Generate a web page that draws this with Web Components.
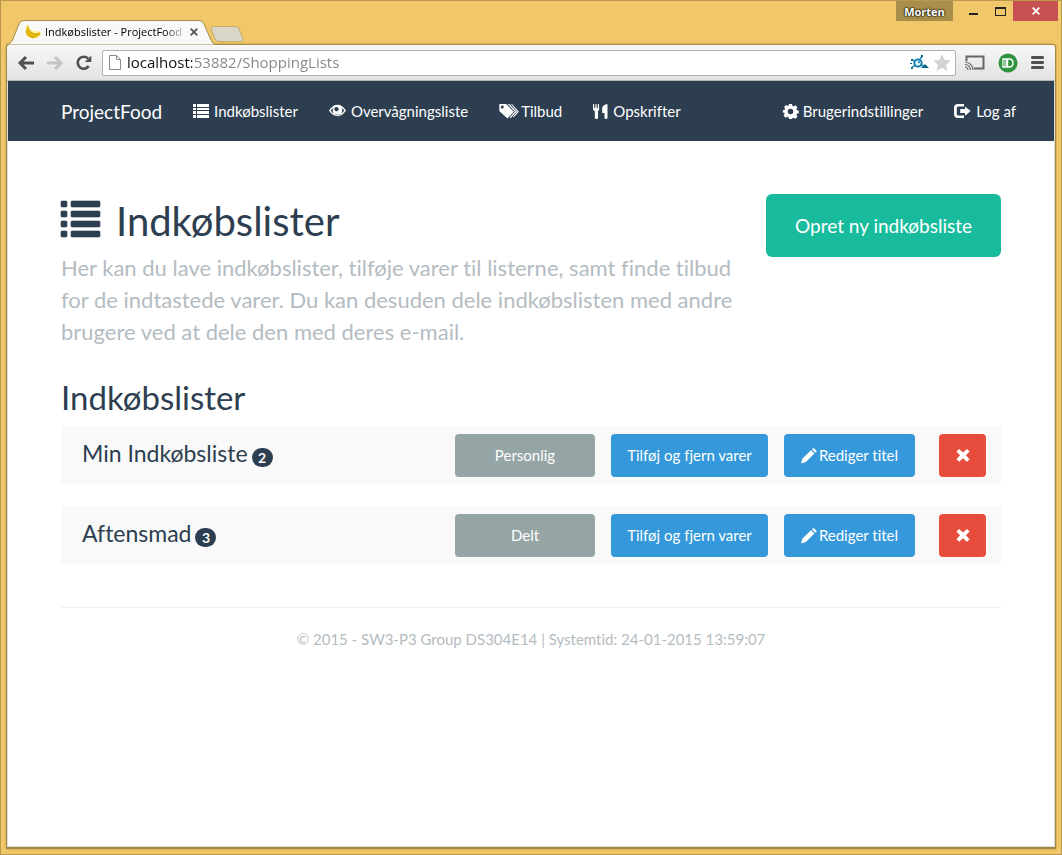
<!DOCTYPE html>
<html lang="da">
<head>
<meta charset="utf-8">
<title>Indkøbslister - ProjectFood</title>
<style>
body{margin:0;font-family:Lato,"Liberation Sans",sans-serif;font-size:15px;line-height:21px;color:#2c3e50;font-variant-ligatures:none}
</style>
</head>
<body>
<browser-window>
  <site-nav></site-nav>
  <shopping-page>
    <shopping-row name="Min Indkøbsliste" count="2" kind="Personlig"></shopping-row>
    <shopping-row name="Aftensmad" count="3" kind="Delt"></shopping-row>
  </shopping-page>
</browser-window>
<script>
const define = (tag, render) => customElements.define(tag, class extends HTMLElement {
  connectedCallback() {
    if (this.shadowRoot) return;
    this.attachShadow({ mode: 'open' }).innerHTML = render(this);
  }
});

const icons = {
  list: [39, 36, '<path d="M1 0h4q1 0 1 1v4q0 1-1 1H1Q0 6 0 5V1q0-1 1-1zM11 0h27q1 0 1 1v4q0 1-1 1H11q-1 0-1-1V1q0-1 1-1zM1 10h4q1 0 1 1v4q0 1-1 1H1q-1 0-1-1v-4q0-1 1-1zM11 10h27q1 0 1 1v4q0 1-1 1H11q-1 0-1-1v-4q0-1 1-1zM1 20h4q1 0 1 1v4q0 1-1 1H1q-1 0-1-1v-4q0-1 1-1zM11 20h27q1 0 1 1v4q0 1-1 1H11q-1 0-1-1v-4q0-1 1-1zM1 30h4q1 0 1 1v4q0 1-1 1H1q-1 0-1-1v-4q0-1 1-1zM11 30h27q1 0 1 1v4q0 1-1 1H11q-1 0-1-1v-4q0-1 1-1z" stroke="currentColor" stroke-width=".6"/>'],
  smalllist: [16, 14, '<path d="M0 0h3v3H0zM4 0h12v3H4zM0 4h3v2H0zM4 4h12v2H4zM0 7h3v3H0zM4 7h12v3H4zM0 11h3v3H0zM4 11h12v3H4z"/>'],
  eye: [17, 14, '<path fill-rule="evenodd" d="M0 6.500C2.500 2.600 5.200.8 8.500.8S14.500 2.600 17 6.500c-2.500 3.900-5.200 5.700-8.500 5.700S2.500 10.400 0 6.500zM1.700 6.500c2 2.900 4.200 4.200 6.800 4.200s4.800-1.300 6.800-4.200c-1-1.400-2-2.400-3.200-3.200a4.800 4.800 0 1 1-7.200 0C3.700 4.100 2.700 5.100 1.700 6.500zM7.300 2.900A2.200 2.200 0 1 0 9.500 6 2.300 2.300 0 0 0 7.300 2.900z"/>'],
  tags: [20, 15, '<path fill-rule="evenodd" d="M.8 0h6.400l7.600 7.700-6.400 6.900L.3 7V.8Q.3 0 .8 0zM3.200 1.600a1.500 1.500 0 1 0 .1 3 1.500 1.500 0 0 0-.1-3z"/><path d="M8.800 0h1.700l7 7.700-5.900 6.500-.9-.8 5.100-5.700zM12 0h1l6.800 7.700-5 5.600-.8-.7 4.200-4.900z"/>'],
  food: [15, 15, '<path d="M0 0h1l.4 4.200h.8L2.500 0h1l.3 4.200h.8L5 0h1l.2 5.300Q6.200 6.400 5 7.200V14Q5 15 3.500 15T1.800 14V7.200Q0 6.400 0 5.300zM14.500.3V14q0 1-1.500 1t-1.500-1V9H9.200V4.500C9.200 2 11.500.3 14.500.3z"/>'],
  gear: [15, 15, '<path fill-rule="evenodd" d="M6 0h3l.5 2 1 .4 1.900-1.100 2 2-1 1.900.4 1 2 .5v2.500l-2 .6-.4 1 1 1.900-2 2-1.900-1-1 .4L9 15H6l-.6-1.900-1-.4-1.800 1-2-2 1-1.900-.4-1L-.2 8.500V6.300l1.900-.5.4-1-1-1.900 2-2 1.900 1 .5-.1zM7.500 4.700a2.800 2.800 0 1 0 0 5.600 2.800 2.800 0 0 0 0-5.600z"/>'],
  logout: [17, 14, '<path d="M4 0h6v2.400H4.500Q2.800 2.400 2.800 4v6Q2.800 11.600 4.500 11.600H10V14H4Q0 14 0 10V4Q0 0 4 0zM11 2.400l5.700 4.700L11 11.700V9H6.200V5.100H11z"/>'],
  pencil: [16, 16, '<path d="M1.500 10.600 10 2.200l3.400 3.400-8.500 8.500L0 15.400zM10.900 1.300l.9-.9q.7-.7 1.500 0l2 2q.7.700 0 1.500l-.9.900z"/>'],
  remove: [14, 13, '<path d="M3 0 7 3.600 11 0 13.600 2.600 9.900 6.300l3.700 3.900-2.700 2.600L7 9.200l-3.900 3.600L.4 10.200 4.100 6.300.4 2.600z"/>'],
  back: [16, 14, '<path d="M8 1 2 7l6 6M2 7h14" fill="none" stroke="currentColor" stroke-width="3"/>'],
  forward: [16, 14, '<path d="m8 1 6 6-6 6M14 7H0" fill="none" stroke="currentColor" stroke-width="3"/>'],
  reload: [16, 16, '<path d="M12.700 11A6 6 0 1 1 12 3.500" fill="none" stroke="currentColor" stroke-width="2.600"/><path d="M15.300.5V7H8.800z"/>'],
  file: [12, 15, '<path d="M.5.500h7l4 4v10H.5zM7.500.5v4h4" fill="#fff" stroke="#8b8b8b"/>'],
  star: [18, 17, '<path d="m9 0 2.600 5.900 6.200.6-4.700 4.200 1.400 6.200L9 13.700l-5.500 3.200 1.400-6.200L.2 6.500l6.200-.6z"/>'],
  bug: [19, 16, '<g fill="none" stroke="#0a78a8" stroke-width="1.200"><circle cx="8" cy="8" r="3.700" fill="#d8f2fa" stroke-width="1.800"/><path d="m10 4 2.500-3M4.500 6 2 4.500M5 10l-3 2.500M11 9l3 3"/></g><path fill="#0a6790" d="m11 13 4-4 4 4zM1 4h2v2H1zM0 8h2v1H0zM1 12h2v2H1zM11 0h2v2h-2z"/><circle cx="9" cy="7" r="1" fill="#0a78a8"/>'],
  cast: [20, 16, '<path d="M1.500 6V1.500h17v12H9" fill="none" stroke="#666" stroke-width="2"/><path d="M0 9.500A5.500 5.500 0 0 1 5.500 15M0 12a3 3 0 0 1 3 3M0 7a8 8 0 0 1 8 8" fill="none" stroke="#666" stroke-width="1.200"/>'],
  push: [20, 20, '<circle cx="10" cy="10" r="9.500" fill="#309340"/><path d="M5 6h3v8H5zM9.500 6H11q4 0 4 4t-4 4H9.500z" fill="none" stroke="#fff" stroke-width="1.400"/><path d="M5 7h3v6H5z" fill="#8cc795"/>'],
  menu: [13, 13, '<path d="M1 0h11q1 0 1 1.500T12 3H1Q0 3 0 1.500T1 0zM1 5h11q1 0 1 1.500T12 8H1Q0 8 0 6.500T1 5zM1 10h11q1 0 1 1.500T12 13H1q-1 0-1-1.500T1 10z"/>'],
  banana: [16, 14, '<path d="M2 0 3.500.500 4 3.500c2 4 5.500 5.500 10.500 3.500L16 8.500c-2 4-6 5.500-9.500 4.500C2 12 0 8.500 1 5z" fill="#f0c414"/><path d="M2.800 4c1 4 5.500 6.700 11.700 5M1.300 6c1 3.500 4.500 6 8.500 6" fill="none" stroke="#b78d0c" stroke-width=".8"/><path d="M4.200 3.500c3 3.200 5.800 3.800 9.500 3" stroke="#fff05a" fill="none"/>'],
  close: [8, 8, '<path d="m.7.700 6.600 6.600m0-6.600L.7 7.300" fill="none" stroke="currentColor" stroke-width="1.800"/>'],
  minimize: [9, 7, '<path d="M0 5h9v2H0z"/>'],
  maximize: [11, 9, '<path fill-rule="evenodd" d="M0 0h11v9H0zM1 2v6h9V2z"/>']
};
define('ui-icon', el => {
  const [w, h, body] = icons[el.getAttribute('name')];
  return `<style>:host{display:inline-block;width:${w}px;height:${h}px;flex:none}svg{display:block;overflow:visible}</style>
  <svg width="${w}" height="${h}" viewBox="0 0 ${w} ${h}" fill="currentColor" aria-hidden="true">${body}</svg>`;
});

define('browser-window', () => `
<style>
:host{display:flex;flex-direction:column;box-sizing:border-box;min-height:100vh;padding:0 5px;border:1px solid #b9974d;background:#f0c869;font-family:"Open Sans","Noto Sans",sans-serif}
button{border:0;padding:0;background:none;font:inherit;color:inherit;display:flex;align-items:center;justify-content:center}
.strip{display:flex;align-items:flex-end;height:43px;margin-right:-2px}
.tab{position:relative;display:flex;align-items:center;box-sizing:border-box;width:204px;height:24px;padding:0 12px 0 19px;color:#111}
.tab>svg{position:absolute;left:0;bottom:-1px}
.tab>*{position:relative}
.title{flex:1;margin:0 4px;overflow:hidden;white-space:nowrap;font-size:11px;line-height:16px;color:#000;-webkit-mask-image:linear-gradient(90deg,#000 120px,transparent 142px)}
.tab button{color:#555;width:8px;height:16px}
.new{align-self:flex-end;height:18px;margin-bottom:1px}
.caption{display:flex;align-self:flex-start;margin-left:auto;height:20px}
.caption button{height:20px;width:28px;color:#222}
.caption .user{width:57px;margin-right:6px;background:#a98d4a;color:#fff;font-size:11px;font-weight:700;text-shadow:0 0 2px #000,0 0 2px #000}
.caption .quit{width:45px;background:#c75050;color:#fff}
.caption .max{width:26px}
.frame{flex:1;display:flex;flex-direction:column;margin-bottom:5px;border:1px solid #a58a46;border-bottom-width:2px;border-radius:4px 4px 0 0;background:#fff;box-shadow:0 0 2px #a5853c}
.bar{display:flex;align-items:center;height:36px;box-sizing:border-box;padding:0 11px;background:linear-gradient(#f8f8f8,#e2e2e2);border-bottom:1px solid #b5b5b5;border-radius:4px 4px 0 0;color:#505050}
.bar button{margin-right:13px}
.bar button:last-child{margin-right:0}
.bar .off{color:#c4c4c4}
.url{flex:1;display:flex;align-items:center;height:26px;box-sizing:border-box;padding:0 4px 0 6px;margin:0 9px 0 -3px;border:1px solid #b0b0b0;border-radius:2px;background:#fff;color:#d2d2d2}
.url button{margin:0 0 0 4px}
input{flex:1;min-width:0;height:24px;margin-left:6px;border:0;padding:0 0 2px;outline:0;box-sizing:border-box;font:15px/22px "Open Sans","Noto Sans",sans-serif;color:transparent;background:linear-gradient(90deg,#111 65px,#858585 65px);-webkit-background-clip:text;background-clip:text}
.view{flex:1;border:1px solid #ddd;border-top:0;font-family:Lato,"Liberation Sans",sans-serif}
</style>
<div class="strip">
  <div class="tab">
    <svg width="208" height="25" viewBox="0 0 208 25"><path d="M0 24.500Q5 24 7 19L13 4Q14 .5 18 .5H193Q197 .5 198 4L205 20Q207 24.500 210 24.500" fill="#f8f8f8" stroke="#a78b47"/></svg>
    <ui-icon name="banana"></ui-icon><span class="title">Indkøbslister - ProjectFood</span>
    <button aria-label="Luk fane"><ui-icon name="close"></ui-icon></button>
  </div>
  <button class="new" aria-label="Ny fane"><svg width="34" height="17"><path d="M4 .5H26Q28 .5 29 3L33 13Q33 15.500 31 15.500H9Q6 15.500 5 13L1 3Q1 .5 4 .5Z" fill="#dad6c8" stroke="#c4ab70"/></svg></button>
  <div class="caption">
    <button class="user">Morten</button>
    <button aria-label="Minimer"><ui-icon name="minimize"></ui-icon></button>
    <button class="max" aria-label="Maksimer"><ui-icon name="maximize"></ui-icon></button>
    <button class="quit" aria-label="Luk"><ui-icon name="close"></ui-icon></button>
  </div>
</div>
<div class="frame">
  <div class="bar">
    <button aria-label="Tilbage"><ui-icon name="back"></ui-icon></button>
    <button class="off" aria-label="Frem"><ui-icon name="forward"></ui-icon></button>
    <button aria-label="Genindlæs"><ui-icon name="reload"></ui-icon></button>
    <div class="url"><ui-icon name="file"></ui-icon><input aria-label="Adresse" value="localhost:53882/ShoppingLists">
      <button aria-label="Udvidelse"><ui-icon name="bug"></ui-icon></button><button aria-label="Bogmærke"><ui-icon name="star"></ui-icon></button></div>
    <button aria-label="Cast"><ui-icon name="cast"></ui-icon></button>
    <button aria-label="Push"><ui-icon name="push"></ui-icon></button>
    <button aria-label="Menu"><ui-icon name="menu"></ui-icon></button>
  </div>
  <div class="view"><slot></slot></div>
</div>`);

define('site-nav', () => `
<style>
:host{display:block;background:#2c3e50;color:#fff}
nav{display:flex;align-items:center;box-sizing:border-box;max-width:970px;min-height:60px;margin:0 auto;padding-left:15px;gap:31px}
a{display:flex;align-items:center;gap:5px;color:#fff;text-decoration:none;white-space:nowrap}
.brand{font-size:19px}
.tight{gap:2px}
.push{margin-left:auto}
</style>
<nav>
  <a class="brand" href="#">ProjectFood</a>
  <a href="#"><ui-icon name="smalllist"></ui-icon>Indkøbslister</a>
  <a href="#"><ui-icon name="eye"></ui-icon>Overvågningsliste</a>
  <a class="tight" href="#"><ui-icon name="tags"></ui-icon>Tilbud</a>
  <a href="#"><ui-icon name="food"></ui-icon>Opskrifter</a>
  <a class="push" href="#"><ui-icon name="gear"></ui-icon>Brugerindstillinger</a>
  <a href="#"><ui-icon name="logout"></ui-icon>Log af</a>
</nav>`);

define('flat-button', el => `
<style>
:host{display:block}
button{display:flex;align-items:center;justify-content:center;gap:2px;box-sizing:border-box;width:100%;height:43px;padding:0 15px;border:0;border-radius:4px;background:var(--fill,#3498db);color:#fff;font:15px/21px Lato,"Liberation Sans",sans-serif;font-variant-ligatures:none;white-space:nowrap}
:host([large]) button{height:63px;padding:0 28px;border-radius:6px;font-size:19px;line-height:27px}
</style>
<button${el.title ? ` aria-label="${el.title}"` : ''}><slot></slot></button>`);

define('shopping-row', el => `
<style>
:host{display:flex;align-items:center;gap:16px;box-sizing:border-box;min-height:59px;padding:0 15px 0 21px;margin-bottom:21px;background:#f9f9f9}
h3{flex:1;display:flex;align-items:center;gap:4px;margin:0;padding-bottom:4px;font-size:23px;line-height:25px;font-weight:400}
.badge{box-sizing:border-box;min-width:21px;padding:0 6px;margin-top:8px;border-radius:10px;background:#2c3e50;color:#fff;font-size:14px;line-height:19px;font-weight:700;text-align:center}
.kind{--fill:#95a5a6;width:140px}
.add{width:157px}
.edit{width:131px}
.delete{--fill:#e74c3c;width:47px;margin-left:8px}
</style>
<h3>${el.getAttribute('name')}<span class="badge">${el.getAttribute('count')}</span></h3>
<flat-button class="kind">${el.getAttribute('kind')}</flat-button>
<flat-button class="add">Tilføj og fjern varer</flat-button>
<flat-button class="edit"><ui-icon name="pencil"></ui-icon>Rediger titel</flat-button>
<flat-button class="delete" title="Slet"><ui-icon name="remove"></ui-icon></flat-button>`);

define('shopping-page', () => `
<style>
:host{display:block;max-width:940px;margin:0 auto;padding:53px 15px 20px}
header{display:flex;justify-content:space-between;align-items:flex-start}
.intro{flex:0 1 697px}
h1{display:flex;align-items:center;gap:16px;margin:6px 0 9px;font-size:40px;line-height:43px;font-weight:400}
h1 ui-icon{margin-bottom:5px}
p{margin:0;font-size:22px;line-height:32px;color:#b4bcc2}
flat-button[large]{--fill:#18bc9c;flex:none;width:235px}
h2{margin:32px 0 11px;font-size:33px;line-height:35px;font-weight:400}
footer{margin-top:42px;padding-top:21px;border-top:1px solid #ecf0f1;text-align:center;color:#b4bcc2}
</style>
<header>
  <div class="intro">
    <h1><ui-icon name="list"></ui-icon>Indkøbslister</h1>
    <p>Her kan du lave indkøbslister, tilføje varer til listerne, samt finde tilbud for de indtastede varer. Du kan desuden dele indkøbslisten med andre brugere ved at dele den med deres e-mail.</p>
  </div>
  <flat-button large>Opret ny indkøbsliste</flat-button>
</header>
<h2>Indkøbslister</h2>
<slot></slot>
<footer>© 2015 - SW3-P3 Group DS304E14 | Systemtid: 24-01-2015 13:59:07</footer>`);
</script>
</body>
</html>
